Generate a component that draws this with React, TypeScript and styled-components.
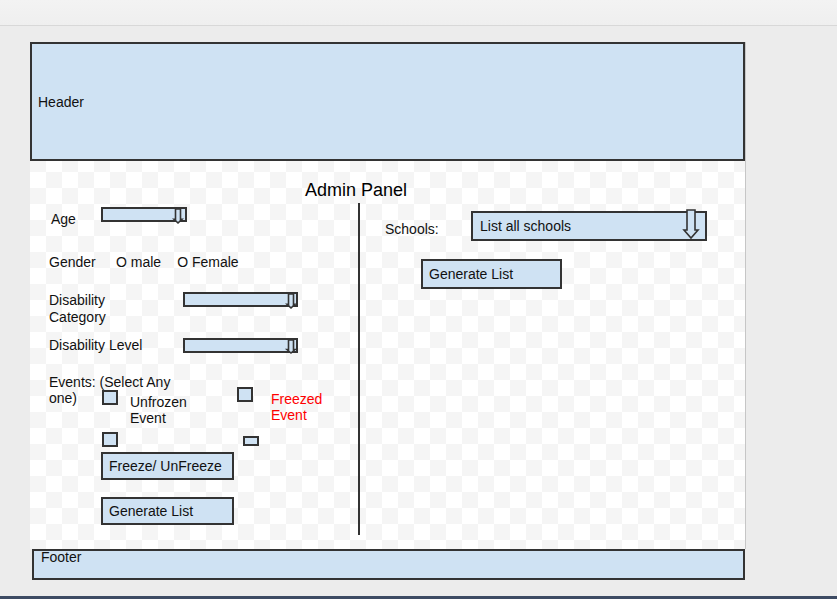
import React from 'react';
import styled, { createGlobalStyle } from 'styled-components';

const GlobalStyle = createGlobalStyle`
  html, body {
    margin: 0;
    padding: 0;
  }

  body {
    font-family: "Liberation Sans", Arial, sans-serif;
    font-size: 14px;
    color: #111;
    background: #ececec;
  }
`;

const FILL = '#cfe2f3';
const LINE = '#333';

const DropArrow: React.FC<{ w: number; h: number; top: number; right: number }> = ({ w, h, top, right }) => {
  const s = w * 0.25;
  const hy = h * 0.7;
  const c = w / 2;
  const d = `M${c - s} 1 L${c + s} 1 L${c + s} ${hy} L${w - 1} ${hy} L${c} ${h - 1} L1 ${hy} L${c - s} ${hy} Z`;
  return (
    <ArrowSvg width={w} height={h} viewBox={`0 0 ${w} ${h}`} $top={top} $right={right}>
      <path d={d} fill={FILL} stroke={LINE} strokeWidth="1.6" strokeLinejoin="miter" />
    </ArrowSvg>
  );
};

const App: React.FC = () => {
  return (
    <Page>
      <GlobalStyle />
      <TopBar />
      <Workspace>
        <Canvas>
          <HeaderBox>Header</HeaderBox>
          <Title>Admin Panel</Title>
          <Columns>
            <LeftCol>
              <FieldRow $mt={4}>
                <Label $w={50} $ml={2} $mt={4}>Age</Label>
                <SelectBox $w={86} $h={15}>
                  <DropArrow w={10} h={16} top={-1} right={2} />
                </SelectBox>
              </FieldRow>

              <FieldRow $mt={27}>
                <Label $w={67}>Gender</Label>
                <Label>O male</Label>
                <Label $ml={16}>O Female</Label>
              </FieldRow>

              <FieldRow $mt={22}>
                <Label $w={134} $lh={17}>
                  <Wrap $max={80}>Disability Category</Wrap>
                </Label>
                <SelectBox $w={115} $h={15}>
                  <DropArrow w={10} h={16} top={-1} right={0} />
                </SelectBox>
              </FieldRow>

              <FieldRow $mt={12}>
                <Label $w={134} $lh={15}>Disability Level</Label>
                <SelectBox $w={115} $h={15}>
                  <DropArrow w={10} h={15} top={-1} right={0} />
                </SelectBox>
              </FieldRow>

              <EventsGrid>
                <Label>
                  <LabelLine>Events: (Select Any</LabelLine>
                  <LabelLine>one)</LabelLine>
                </Label>
                <OptionsRow>
                  <Checkbox $mt={3} />
                  <OptionText $ml={12} $mt={7}>Unfrozen Event</OptionText>
                  <Checkbox $ml={47} />
                  <OptionText $ml={18} $mt={4} $red>Freezed Event</OptionText>
                </OptionsRow>
              </EventsGrid>

              <CheckRow>
                <Checkbox />
                <Checkbox $ml={125} $mt={4} $h={10} />
              </CheckRow>

              <ActionButton $w={133} $h={28} $ml={52} $mt={5}>Freeze/ UnFreeze</ActionButton>
              <ActionButton $w={133} $h={28} $ml={52} $mt={17}>Generate List</ActionButton>
            </LeftCol>

            <Divider />

            <RightCol>
              <FieldRow $mt={8}>
                <Label $w={86} $mt={10}>Schools:</Label>
                <SelectBox $w={236} $h={30}>
                  List all schools
                  <DropArrow w={16} h={30} top={-4} right={6} />
                </SelectBox>
              </FieldRow>
              <ActionButton $w={141} $h={30} $ml={36} $mt={18}>Generate List</ActionButton>
            </RightCol>
          </Columns>
        </Canvas>
        <FooterBox>Footer</FooterBox>
      </Workspace>
      <BottomLine />
    </Page>
  );
};

const Page = styled.div`
  height: 599px;
  display: flex;
  flex-direction: column;
  overflow: hidden;
  background: #ececec;
`;

const TopBar = styled.div`
  height: 25px;
  flex-shrink: 0;
  background: linear-gradient(#f3f3f3, #efefef);
  border-bottom: 1px solid #d8d8d8;
`;

const Workspace = styled.div`
  padding: 16px 0 0 30px;
`;

const Canvas = styled.div`
  width: 716px;
  height: 507px;
  box-sizing: border-box;
  border-right: 1px solid #c6c6c6;
  background-color: #fff;
  background-image:
    linear-gradient(45deg, #f5f5f5 25%, transparent 25%, transparent 75%, #f5f5f5 75%),
    linear-gradient(45deg, #f5f5f5 25%, transparent 25%, transparent 75%, #f5f5f5 75%);
  background-size: 32px 32px;
  background-position: 0 2px, 16px 18px;
  display: flex;
  flex-direction: column;
`;

const HeaderBox = styled.div`
  height: 119px;
  box-sizing: border-box;
  border: 2px solid ${LINE};
  background: ${FILL};
  display: flex;
  align-items: center;
  padding-left: 6px;
`;

const Title = styled.div`
  margin-top: 19px;
  padding-left: 275px;
  font-size: 18px;
  line-height: 20px;
  color: #000;
`;

const Columns = styled.div`
  margin-top: 3px;
  height: 332px;
  display: grid;
  grid-template-columns: 328px 2px 1fr;
`;

const LeftCol = styled.div`
  display: flex;
  flex-direction: column;
  align-items: flex-start;
  padding-left: 19px;
`;

const RightCol = styled.div`
  display: flex;
  flex-direction: column;
  align-items: flex-start;
  padding-left: 25px;
`;

const Divider = styled.div`
  background: ${LINE};
`;

const FieldRow = styled.div<{ $mt?: number }>`
  display: flex;
  align-items: flex-start;
  margin-top: ${p => p.$mt ?? 0}px;
`;

const Label = styled.div<{ $w?: number; $ml?: number; $mt?: number; $lh?: number }>`
  flex-shrink: 0;
  width: ${p => (p.$w ? `${p.$w}px` : 'auto')};
  margin-left: ${p => p.$ml ?? 0}px;
  margin-top: ${p => p.$mt ?? 0}px;
  line-height: ${p => p.$lh ?? 16}px;
  box-sizing: border-box;
`;

const Wrap = styled.div<{ $max: number }>`
  max-width: ${p => p.$max}px;
`;

const LabelLine = styled.div`
  width: fit-content;
  white-space: nowrap;
`;

const SelectBox = styled.div<{ $w: number; $h: number }>`
  position: relative;
  width: ${p => p.$w}px;
  height: ${p => p.$h}px;
  box-sizing: border-box;
  border: 2px solid ${LINE};
  background: ${FILL};
  padding-left: 7px;
  line-height: ${p => p.$h - 4}px;
`;

const ArrowSvg = styled.svg<{ $top: number; $right: number }>`
  position: absolute;
  top: ${p => p.$top}px;
  right: ${p => p.$right}px;
  overflow: visible;
`;

const EventsGrid = styled.div`
  margin-top: 21px;
  display: grid;

  & > * {
    grid-area: 1 / 1;
  }
`;

const OptionsRow = styled.div`
  display: flex;
  align-items: flex-start;
  margin-top: 13px;
  padding-left: 53px;
`;

const CheckRow = styled.div`
  display: flex;
  align-items: flex-start;
  margin-top: 6px;
  padding-left: 53px;
`;

const Checkbox = styled.div<{ $ml?: number; $mt?: number; $h?: number }>`
  flex-shrink: 0;
  width: 16px;
  height: ${p => p.$h ?? 15}px;
  margin-left: ${p => p.$ml ?? 0}px;
  margin-top: ${p => p.$mt ?? 0}px;
  box-sizing: border-box;
  border: 2px solid ${LINE};
  background: ${FILL};
`;

const OptionText = styled.div<{ $ml?: number; $mt?: number; $red?: boolean }>`
  width: 60px;
  margin-left: ${p => p.$ml ?? 0}px;
  margin-top: ${p => p.$mt ?? 0}px;
  line-height: 16px;
  color: ${p => (p.$red ? '#ff0000' : '#111')};
`;

const ActionButton = styled.div<{ $w: number; $h: number; $ml: number; $mt: number }>`
  width: ${p => p.$w}px;
  height: ${p => p.$h}px;
  margin-left: ${p => p.$ml}px;
  margin-top: ${p => p.$mt}px;
  box-sizing: border-box;
  border: 2px solid ${LINE};
  background: ${FILL};
  padding-left: 6px;
  display: flex;
  align-items: center;
`;

const FooterBox = styled.div`
  width: 713px;
  height: 31px;
  margin-left: 2px;
  box-sizing: border-box;
  border: 2px solid ${LINE};
  background: ${FILL};
  padding-left: 7px;
  line-height: 13px;
`;

const BottomLine = styled.div`
  margin-top: auto;
  height: 3px;
  background: #3d4b63;
`;

export default App;
